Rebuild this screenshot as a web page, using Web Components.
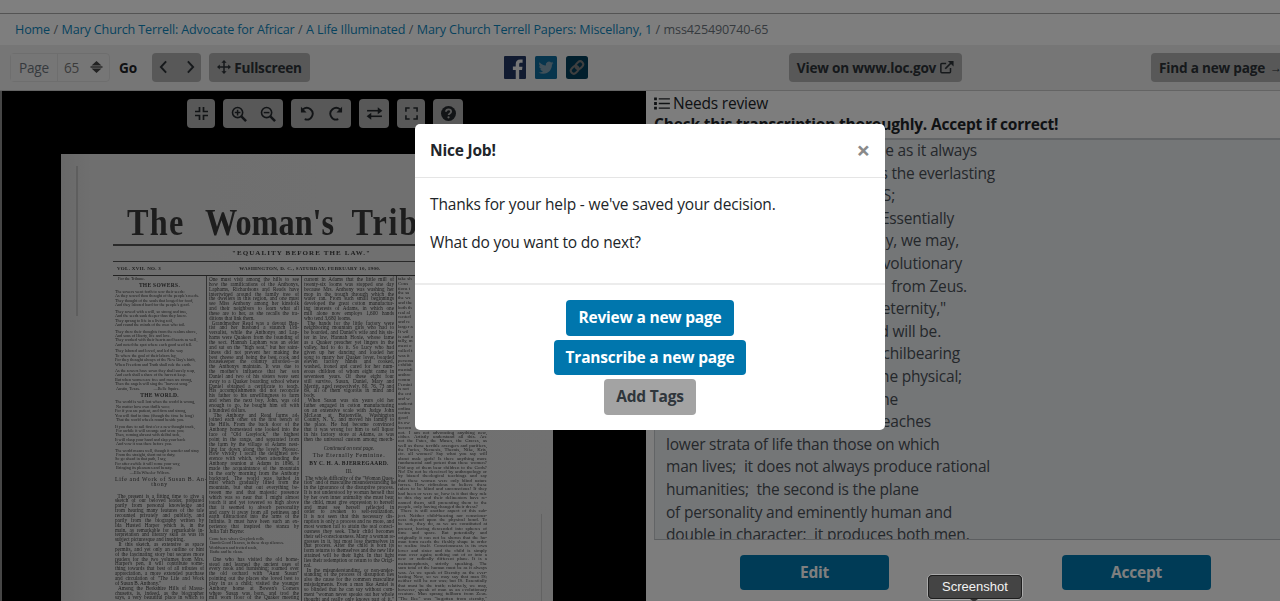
<!DOCTYPE html>
<html lang="en">
<head>
<meta charset="utf-8">
<title>Nice Job!</title>
<style>
html, body { margin: 0; height: 601px; overflow: hidden; background: #fff; }
body { font-family: "Open Sans", "Liberation Sans", sans-serif; color: #212529; letter-spacing: -.2px; }
</style>
</head>
<body>
<review-app></review-app>

<script>
// every element gets its own open shadow root, cloned from a template
function component(tag, css, html) {
  const template = document.createElement('template');
  template.innerHTML = `<style>${css}</style>${html}`;
  class Element extends HTMLElement {
    constructor() {
      super();
      this.attachShadow({ mode: 'open' });
      this.shadowRoot.appendChild(template.content.cloneNode(true));
    }
  }
  customElements.define(tag, Element);
}

const icon = (w, h, box, body) =>
  `<svg width="${w}" height="${h}" viewBox="${box}" fill="none" stroke="currentColor" stroke-width="1.700" aria-hidden="true">${body}</svg>`;

const icons = {
  compress: icon(13, 13, '0 0 13 13', '<path d="M4.500 0v4.500H0M8.500 0v4.500H13M4.500 13V8.500H0M8.500 13V8.500H13"/>'),
  zoomIn: icon(16, 16, '0 0 17 17', '<circle cx="7" cy="7" r="5.400"/><path d="M11 11l5 5" stroke-width="2.600"/><path d="M4 7h6M7 4v6" stroke-width="1.600"/>'),
  zoomOut: icon(16, 16, '0 0 17 17', '<circle cx="7" cy="7" r="5.400"/><path d="M11 11l5 5" stroke-width="2.600"/><path d="M4 7h6" stroke-width="1.600"/>'),
  undo: icon(15, 15, '0 0 16 16', '<path d="M3.200 3.500A6.200 6.200 0 1 1 5 14" stroke-width="2"/><path d="M1 .8V6.800H7z" fill="currentColor" stroke="none"/>'),
  redo: icon(15, 15, '0 0 16 16', '<path d="M12.800 3.500A6.200 6.200 0 1 0 11 14" stroke-width="2"/><path d="M15 .8V6.800H9z" fill="currentColor" stroke="none"/>'),
  swap: icon(17, 13, '0 0 18 14', '<path d="M1 4h14"/><path d="M17.500 4L12.500 .3v7.400z" fill="currentColor" stroke="none"/><path d="M17 10H3"/><path d="M.5 10l5-3.700v7.400z" fill="currentColor" stroke="none"/>'),
  expand: icon(13, 13, '0 0 14 14', '<path d="M1 5V1h4M9 1h4v4M1 9v4h4M13 9v4H9"/>'),
  help: `<svg width="15" height="15" viewBox="0 0 16 16" aria-hidden="true"><circle cx="8" cy="8" r="8" fill="currentColor"/><path d="M5.300 6.200C5.400 4.500 6.500 3.700 8 3.700c1.600 0 2.800.9 2.800 2.300 0 2-2.700 1.900-2.700 3.700" fill="none" stroke="#b0b0b0" stroke-width="1.900"/><circle cx="8" cy="12" r="1.200" fill="#b0b0b0"/></svg>`,
  left: icon(9, 14, '0 0 10 16', '<path d="M8 1.500L2 8l6 6.500" stroke-width="2.200"/>'),
  right: icon(9, 14, '0 0 10 16', '<path d="M2 1.500L8 8l-6 6.500" stroke-width="2.200"/>'),
  move: icon(14, 14, '0 0 15 15', '<path d="M7.500 2v11M2 7.500h11" stroke-width="1.600"/><path d="M7.500 0l2.800 3H4.700zM7.500 15l2.800-3H4.700zM0 7.500l3-2.800v5.600zM15 7.500l-3-2.800v5.600z" fill="currentColor" stroke="none"/>'),
  external: icon(14, 14, '0 0 16 15', '<path d="M12 8.500V13a1 1 0 0 1-1 1H2a1 1 0 0 1-1-1V4.500a1 1 0 0 1 1-1h5" stroke-width="1.700"/><path d="M6 9.500L14 1.500" stroke-width="2"/><path d="M9 .5h6.500V7z" fill="currentColor" stroke="none"/>'),
  list: icon(16, 13, '0 0 17 14', '<path d="M5 2h12M5 7h12M5 12h12" stroke-width="1.500"/><path d="M0 .5h3v3H0zM0 5.500h3v3H0zM0 10.500h3v3H0z" fill="currentColor" stroke="none"/>'),
  updown: `<svg width="13" height="12" viewBox="0 0 13 12" aria-hidden="true" fill="currentColor"><path d="M6.500 0L11.500 4.500H1.500zM6.500 12L11.500 7.500H1.500z"/><path d="M.5 5.300h12v1.400H.5z"/></svg>`,
  facebook: `<svg width="22" height="23" viewBox="0 0 24 24" aria-hidden="true" preserveAspectRatio="none"><path fill="#233763" d="M22.676 0H1.324C.593 0 0 .593 0 1.324v21.352C0 23.408.593 24 1.324 24h11.494v-9.294H9.689v-3.621h3.129V8.410c0-3.099 1.894-4.785 4.659-4.785 1.325 0 2.464.097 2.796.141v3.240h-1.921c-1.500 0-1.792.721-1.792 1.771v2.311h3.584l-.465 3.630H16.560V24h6.115c.733 0 1.325-.592 1.325-1.324V1.324C24 .593 23.408 0 22.676 0"/></svg>`,
  twitter: `<svg width="22" height="23" viewBox="0 0 22 23" aria-hidden="true"><rect width="22" height="23" rx="1.500" fill="#0f6a9b"/><g transform="translate(3.500 4.200) scale(.625)"><path fill="#83a0b2" d="M23.953 4.570a10 10 0 0 1-2.825.775 4.958 4.958 0 0 0 2.163-2.723c-.951.555-2.005.959-3.127 1.184a4.920 4.920 0 0 0-8.384 4.482C7.690 8.095 4.067 6.130 1.640 3.162a4.822 4.822 0 0 0-.666 2.475c0 1.710.870 3.213 2.188 4.096a4.904 4.904 0 0 1-2.228-.616v.060a4.923 4.923 0 0 0 3.946 4.827 4.996 4.996 0 0 1-2.212.085 4.936 4.936 0 0 0 4.604 3.417 9.867 9.867 0 0 1-6.102 2.105c-.390 0-.779-.023-1.170-.067a13.995 13.995 0 0 0 7.557 2.209c9.053 0 13.998-7.496 13.998-13.985 0-.210 0-.420-.015-.630A9.935 9.935 0 0 0 24 4.590z"/></g></svg>`,
  chain: `<svg width="22" height="23" viewBox="0 0 22 23" aria-hidden="true"><rect width="22" height="23" rx="2.500" fill="#033f5b"/><g fill="none" stroke="#7e7e7e" stroke-width="2" transform="rotate(-45 11 11.500)"><rect x="3.500" y="8.500" width="8.500" height="6" rx="3"/><rect x="10" y="8.500" width="8.500" height="6" rx="3"/></g></svg>`
};

component('bread-crumbs', `
  :host { display: flex; align-items: center; height: 31px; padding-left: 15px; font-size: 12.600px; letter-spacing: -.15px; color: #7a8a93; background: #fdfdfd; white-space: nowrap; }
  a { color: #0e86bd; text-decoration: none; }
  i { font-style: normal; color: #6c757d; padding: 0 3.500px; }
  span { color: #6c757d; }
`, `
  <a href="#">Home</a><i>/</i>
  <a href="#">Mary Church Terrell: Advocate for Africar</a><i>/</i>
  <a href="#">A Life Illuminated</a><i>/</i>
  <a href="#">Mary Church Terrell Papers: Miscellany, 1</a><i>/</i>
  <span>mss425490740-65</span>
`);

component('tool-button', `
  :host { display: inline-flex; align-items: center; justify-content: center; gap: 5px; height: 29px; box-sizing: border-box; padding: 0 8px; background: #b0b0b0; color: #2c3237; border-radius: 4px; font-weight: 700; font-size: 13.600px; white-space: nowrap; flex: none; }
  svg { display: block; }
`, `<slot></slot>`);

component('page-toolbar', `
  :host { display: flex; align-items: center; height: 46px; box-sizing: border-box; padding: 0 0 1px 10px; background: #ededed; border-bottom: 1px solid #c9c9c9; overflow: hidden; white-space: nowrap; }
  .page { display: flex; height: 29px; box-sizing: border-box; border: 1px solid #dcdcdc; border-radius: 4px; font-size: 13.600px; color: #6c757d; flex: none; }
  .page b { font-weight: 400; width: 46px; display: flex; align-items: center; justify-content: center; background: #ececec; border-right: 1px solid #dcdcdc; }
  .page span { width: 51px; display: flex; align-items: center; justify-content: space-between; box-sizing: border-box; padding: 0 6px 0 6px; color: #777; }
  .page span svg { color: #444; }
  .go { font-weight: 700; font-size: 13.600px; color: #1f2327; width: 33px; margin-left: 9px; flex: none; }
  .pair { gap: 18px; width: 49px; padding: 0; }
  .move { width: 101px; margin-left: 8px; padding: 0; gap: 3px; }
  .share { display: flex; gap: 9px; margin: 0 201px 0 194px; flex: none; }
  .share svg { display: block; }
  .view { width: 173px; padding: 0; gap: 4px; }
  .find { margin-left: 189px; }
  .find span { font-size: 12px; }
`, `
  <div class="page"><b>Page</b><span>65 ${icons.updown}</span></div>
  <div class="go">Go</div>
  <tool-button class="pair">${icons.left}${icons.right}</tool-button>
  <tool-button class="move">${icons.move}Fullscreen</tool-button>
  <div class="share">${icons.facebook}${icons.twitter}${icons.chain}</div>
  <tool-button class="view">View on www.loc.gov${icons.external}</tool-button>
  <tool-button class="find">Find a new page <span>→</span></tool-button>
`);

component('viewer-controls', `
  :host { display: flex; gap: 8px; height: 29px; padding-left: 185px; }
  tool-button { padding: 0; width: 28px; color: #24292d; }
  .double { width: 60px; gap: 13px; }
  .wide { width: 30px; }
`, `
  <tool-button>${icons.compress}</tool-button>
  <tool-button class="double">${icons.zoomIn}${icons.zoomOut}</tool-button>
  <tool-button class="double">${icons.undo}${icons.redo}</tool-button>
  <tool-button class="wide">${icons.swap}</tool-button>
  <tool-button>${icons.expand}</tool-button>
  <tool-button class="wide">${icons.help}</tool-button>
`);

// one div per printed line; short lines and paragraph ends stay flush left
const lines = (text) => {
  const rows = text.trim().split('\n').map(l => l.trim());
  return rows.map((l, i) => {
    const next = rows[i + 1];
    const end = l.length < 27 || (next && next.startsWith('&nbsp;'));
    return `<div${end ? ' class="e"' : ''}>${l}</div>`;
  }).join('');
};

component('news-page', `
  :host { display: block; width: 492px; height: 460px; box-sizing: border-box;
    background:
      linear-gradient(90deg, transparent 15px, #bdbdbd 15px, #bdbdbd 17px, transparent 17px) no-repeat 0 12px / 100% 150px,
      linear-gradient(90deg, transparent 480px, #c4c4c4 480px, #c4c4c4 481px, transparent 481px) no-repeat 0 360px / 100% 100px,
      linear-gradient(90deg, #d2d2d2 0, #dedede 6%, #e2e2e2 100%);
    padding: 52px 63px 0 52px; color: #3c3c3c; font-family: "Liberation Serif", serif; letter-spacing: 0; overflow: hidden; filter: blur(.35px); }
  h1 { margin: 0; height: 38px; font-size: 38px; line-height: 32px; font-weight: 700; padding-left: 14px; white-space: nowrap; word-spacing: 11px; color: #3a3a3a; transform: scaleX(.85); transform-origin: 14px 0; }
  h1 span { letter-spacing: 1.500px; margin-right: 4px; }
  h1 em { font-style: normal; letter-spacing: 2px; }
  .motto { border-top: 2px solid #555; border-bottom: 1px solid #555; height: 15px; text-align: center; font-size: 7px; line-height: 15px; letter-spacing: 1.100px; font-weight: 700; }
  .date { display: flex; gap: 78px; height: 13px; border-bottom: 1px solid #444; font-size: 5px; line-height: 13px; font-weight: 700; letter-spacing: .300px; padding: 0 6px 0 4px; }
  .cols { display: grid; grid-template-columns: 94px 95px 95px 92px; }
  .col { font-size: 5.200px; line-height: 4.850px; box-sizing: border-box; padding: 1px 2px 0 2px; border-right: 1px solid #666; text-align: justify; height: 330px; overflow: hidden; }
  .col:last-child { border: 0; padding-left: 1px; }
  .col div { text-align-last: justify; white-space: nowrap; height: 4.850px; }
  .col div.e { text-align-last: left; }
  .col:last-child div { height: 4.380px; line-height: 4.380px; font-size: 4.900px; }
  .col:last-child div.s { height: 4.800px; line-height: 4.800px; text-align-last: left; }
  section { text-align: left; }
  section div, .col section div { text-align-last: left; font-size: 4.200px; height: 4.400px; line-height: 4.400px; }
  section p { margin: 0 0 2.200px; }
  h2 { margin: 1.500px 0; font-size: 5.500px; line-height: 5px; text-align: center; font-weight: 700; letter-spacing: .300px; }
  .col h3 { margin: 2px 0 6px; font-size: 5.800px; line-height: 5.200px; text-align: center; font-weight: 400; letter-spacing: .700px; white-space: nowrap; }
  .col .c { text-align-last: center; }
`, `
  <h1><span>The</span> Woman's <em>Trib</em></h1>
  <div class="motto">"EQUALITY BEFORE THE LAW."</div>
  <div class="date"><span>VOL. XVII. NO. 3</span><span>WASHINGTON, D. C., SATURDAY, FEBRUARY 10, 1900.</span></div>
  <div class="cols">
    <div class="col">
      <section>
        <div style="padding-left:3px">For the Tribune.</div>
        <h2>THE SOWERS.</h2>
        <p>${lines(`The sowers went forth to sow their seeds:
          As they sowed thou thought of the people's needs.
          They thought of the souls that longed for food,
          And they labored hard for the people's good.`)}</p>
        <p>${lines(`They sowed with a will, so strong and true,
          And the seeds sank deeper than they knew.
          They sprang to life in a living soil,
          And round the minds of the men who toil.`)}</p>
        <p>${lines(`They drew their thoughts from the realms above,
          And sons of liberty, life and love.
          They worked with their hearts and hearts as well,
          And noted the spot where each good seed fell.`)}</p>
        <p>${lines(`They labored and loved, and led the way
          To where the goal of their labors lay,
          For they thought always of the New Day's birth,
          When Freedom and Truth shall rule the earth.`)}</p>
        <p>${lines(`As the sowers have sown they shall surely reap,
          And each shall a share of the harvest keep.
          But when women are free and men are strong,
          Then the angels will sing the "harvest song."
          &nbsp;Austin, Texas. &nbsp; &nbsp; &nbsp; &nbsp; &nbsp; &nbsp; —Belle Squire.`)}</p>
        <h2>THE WORLD.</h2>
        <p>${lines(`The world is well lost when the world is wrong,
          &nbsp;No matter how own thrills woo;
          For if you are patient, and firm and strong,
          You will find in time (though the time be long)
          &nbsp;That the world wheels round beside you.`)}</p>
        <p>${lines(`If you dare to sail first o'er a new thought track,
          &nbsp;For awhile it will scourge and score you;
          Then, coming abreast with skilful tack,
          It will clasp your hand and slap your back
          &nbsp;And vow it was there before you.`)}</p>
        <p>${lines(`The world means well, though it wander and stray
          &nbsp;From the straight, short cut to duty;
          So go ahead in that path, I say,
          For after awhile it will come your way,
          &nbsp;Bringing its pleasures and beauty.
          &nbsp; &nbsp; &nbsp; &nbsp; &nbsp; &nbsp; &nbsp; —Ella Wheeler Wilcox.`)}</p>
      </section>
      <h3>Life and Work of Susan B. An-<br>thony</h3>
      ${lines(`&nbsp;The present is a fitting time to give a
        sketch of our beloved leader, prepared
        partly from personal knowledge and
        from hearing many features of the tale
        recounted privately and publicly, and
        partly from the biography written by
        Ida Husted Harper which is, in the
        main, as remarkable for remarkable in-
        terpretation and literary skill as was its
        subject picturesque and inspiring.
        &nbsp;If this sketch, as extensive as space
        permits, and yet only an outline or hint
        of the fascinating story but secures more
        readers for the two volumes from Mrs.
        Harper's pen, it will contribute some-
        thing towards that best of all tributes of
        appreciation, a more extended purchase
        and circulation of "The Life and Work
        of Susan B. Anthony."
        &nbsp;Among the Berkshire Hills of Massa-
        chusetts, is, indeed, as the biographer
        says, a very beautiful place in which to`)}
    </div>
    <div class="col">
      ${lines(`One must visit among the hills to see
        how the ramifications of the Anthonys,
        Laphams, Richardsons and Reads have
        intertwined around the family tree of
        the dwellers in this region, and one must
        see Miss Anthony among her kinsfolk
        and their neighbors to learn what all
        these are to her, as she recalls the tra-
        ditions that link them.
        &nbsp;Grandmother Read was a devout Bap-
        tist and her husband a staunch Uni-
        versalist, while the Anthonys and Lap-
        hams were Quakers from the founding of
        the sect. Hannah Lapham was an elder
        and sat on the "high seat," but her saint-
        liness did not prevent her making the
        best cheese and being the best cook and
        housekeeper the country afforded—as
        the Anthonys maintain. It was due to
        the mother's influence that her son
        Daniel and two of his sisters were sent
        away to a Quaker boarding school where
        Daniel obtained a certificate to teach.
        His accomplishments did not reconcile
        his father to his unwillingness to farm
        and when the next boy, John, was old
        enough to go, he bought him off with
        a hundred dollars.
        &nbsp;The Anthony and Read farms ad-
        joined each other on the first bench of
        the Hills. From the back door of the
        Anthony homestead one looked into the
        face of "Old Greylock," the highest
        point in the range, and separated from
        the farm by the village of Adams nest-
        ling far down along the lovely Hoosac.
        How vividly I recall the delighted rev-
        erence with which, when attending the
        Anthony reunion at Adams in 1896, I
        made the acquaintance of the mountain
        in the early morning from the Anthony
        backyard. The world was bathed in
        mist which gradually lifted from the
        mountain, but shut out everything be-
        tween me and that majestic presence
        which was so near that I might almost
        touch it and yet towered so high above
        that it seemed to absorb personality
        and carry it away from all pettiness and
        earth distractions into the arms of the
        Infinite. It must have been such an ex-
        perience that inspired the stanza by
        Julia Taft Bayne:`)}
      <section>
        <p style="padding:1px 0 0 6px">${lines(`Come here where Greylock rolls
          &nbsp;Dumb Good Heaven, in these deep silences.
          Worldwarn and fretted souls,
          &nbsp;Bathe and be clean.`)}</p>
      </section>
      ${lines(`&nbsp;One who has visited the old home-
        stead and learned the ancient uses of
        every nook and furnishing; roamed over
        the old orchard with "Aunt Susan"
        pointing out the places she loved best to
        play in as a child; visited the younger
        Anthony home at Bowen's Corners
        where Susan was born, and trod the
        mill worn floor of the Quaker meeting`)}
    </div>
    <div class="col">
      ${lines(`current in Adams that the little mill of
        twenty-six looms was stopped one day
        because Mrs. Anthony was washing her
        mop in the trough through which the
        water ran. From such small beginnings
        developed the great cotton manufactur-
        ing interests of Adams, in which one
        mill alone now employs 1,600 hands
        who tend 3,680 looms.
        &nbsp;The hands for the little factory were
        neighboring mountain girls who had to
        be boarded, and Daniel's wife and his sis-
        ter in law, Hannah Hoxie, whose fame
        as a Quaker preacher yet lingers in the
        valley, had to do it. So Lucy who had
        given up her dancing and loaded her
        song to marry her Quaker lover, boarded
        eleven factory hands and cooked,
        washed, ironed and cared for her num-
        erous children of whom eight came in
        seventeen years. Of these eight four
        still survive, Susan, Daniel, Mary and
        Merritt, aged respectively, 80, 76, 73 and
        69, all of them vigorous in mind and
        body.
        &nbsp;When Susan was six years old her
        father engaged in cotton manufacturing
        on an extensive scale with Judge John
        McLean at Battenville, Washington
        County, N. Y., and moved his family to
        the place. He had become convinced
        that it was wrong for him to sell liquor
        in his factory store at Adams, as was
        then the universal custom among merch-`)}
      <div class="c" style="margin:4px 0 2px;font-style:italic">Continued on next page.</div>
      <h3 style="margin:2px 0 2px">The Eternally Feminine.</h3>
      <h2 style="margin:3px 0">BY C. H. A. BJERREGAARD.</h2>
      <div class="c" style="margin-bottom:2px">III.</div>
      ${lines(`&nbsp;The whole difficulty of the "Woman Ques-
        tion" and of masculine misunderstanding lies
        in the ignorance of the disruptive process.
        It is not understood by woman herself that
        by her own inner animality she must bear
        the child, must give expression to herself
        and must see herself reflected in
        order to awaken to self-realization.
        It is not seen that this necessary dis-
        ruption is only a process and no more, and
        most women fail to attain the real consci-
        ousness they seek. Their child becomes
        their self-consciousness. Many a woman re-
        gresses in it, but most lose themselves in
        that process. After the child is born its
        form returns to themselves and the new life
        attained will be their light. In that light
        lies their redemption or return to the Origi-
        nal.
        &nbsp;In the misunderstanding, or non-under-
        standing of the process of disruption lies
        also the cause for the common masculine
        misjudgments. Even a man like Amiel is
        so blinded that he can say without com-
        ment "woman never speaks out her whole
        thought and really only knows part of it,"
        and declare her a "sphinx, a mystery and
        contradictory, a monster of moral mischief."
        He cannot see that she is the eternal enigma`)}
    </div>
    <div class="col" id="last">
      ${lines(`take sh
        Cons
        tions t
        the sa
        the we
        and the
        both th
        real al
        cented
        and re
        larger a
        It wil
        is and o
        tally, m
        ment o
        called t
        was it
        persona
        exhibit
        mentali
        anthro
        comm
        Femini
        is not
        the ent
        and w
        underst
        ordina
        centra
        good
        its ow
        becom`).replace(/<div[^>]*>/g, '<div class="s">')}
      ${lines(`not. I am not advocating anything new,
        either. Artistly understand all this. Are
        not the Fates, the Muses, the Graces, as
        well as those terrible avengers and purifiers,
        the Furies, Nemesis, Themis, Nike, Kris,
        etc. all women? Say what you say will
        about male gods! Is there anything more
        fundamental and potent than these women?
        Did any of them bear children to the Gods?
        No! Do not be deceived by anthropology or
        by biased theological teachings and say
        that these women were only blind nature
        forces. How ridiculous to believe these
        rulers to be blind and unconscious! If they
        had been or were so, how is it that they rule
        to this day and their delineators have re-
        named them, still presenting them to the
        people, only having changed their dress?
        &nbsp;There is still another aspect of this sub-
        ject. Neither child-bearing nor conscious-
        ness depend upon the physical bond. To
        be sure, they do, as we are constituted at
        present, having descended into spheres of
        time and space. But potentially and
        originally it can not be shown that the hu-
        man form needs the fleshly shape in order
        to realize itself. Consciousness is its own
        lover and sister and the child is simply
        man over again; nothing out of or into a
        new or radically different plane. It is a
        metamorphosis, strictly speaking. The
        sum total of the human must be as it always
        was. As we speak of Eternity as the ever-
        lasting Now, so we may say that man IS;
        neither will he nor was; but IS. Essentially
        that must be the truth; relatively, we may,
        however, speak of man as an evolutionary
        creature. Man sprang fullborn from Zeus.
        "The Bee" was "begotten from eternity,"`)}
    </div>
  </div>
`);

component('image-viewer', `
  :host { display: block; box-sizing: border-box; width: 646px; flex: none; background: #000; border-left: 2px solid #8c8c8c; padding-top: 8px; overflow: hidden; }
  news-page { margin: 26px 0 0 59px; }
`, `
  <viewer-controls></viewer-controls>
  <news-page></news-page>
`);

const transcript = [
  [311, 'e as it always'], [329, 's the everlasting'], [229, 'S;'], [288, 'Essentially'],
  [293, 'y, we may,'], [296, 'volutionary'], [301, 'from Zeus.'], [280, 'eternity,"'],
  [275, 'd will be.'], [294, 'chilbearing'], [296, 'he physical;'], [232, 'he'], [265, 'eaches'],
  [0, 'lower strata of life than those on which'],
  [0, 'man lives;&nbsp; it does not always produce rational'],
  [0, 'humanities;&nbsp; the second is the plane'],
  [0, 'of personality and eminently human and'],
  [0, 'double in character;&nbsp; it produces both men.']
];

component('review-panel', `
  :host { display: flex; flex-direction: column; flex: 1; min-width: 0; box-sizing: border-box; padding-left: 8px; background: #fafafa; }
  header { height: 49px; box-sizing: border-box; border-bottom: 2px solid #c4c8cc; color: #212529; font-size: 15.500px; line-height: 22px; }
  .status { display: flex; align-items: center; gap: 3px; padding-top: 1px; }
  .status svg { display: block; }
  strong { display: block; font-weight: 700; white-space: nowrap; line-height: 19px; padding-top: 1px; }
  .text { height: 400px; box-sizing: border-box; background: #e9ecef; border-left: 1px solid #c4c8cc; border-bottom: 1px solid #b8bcc0; padding: 0 0 0 11px; overflow: hidden; font-size: 15.500px; line-height: 22.600px; color: #495057; }
  .text > div { margin-top: -1px; }
  .text p { margin: 0; height: 22.600px; white-space: nowrap; }
  .text p[style] { text-align: right; }
  footer { display: flex; gap: 173px; padding: 15px 0 0 86px; }
  .act { width: 149px; height: 35px; border-radius: 4px; background: #0076ad; color: #fff; font-weight: 700; font-size: 15.500px; line-height: 35px; text-align: center; }
`, `
  <header>
    <div class="status">${icons.list}<span>Needs review</span></div>
    <strong>Check this transcription thoroughly. Accept if correct!</strong>
  </header>
  <div class="text"><div>${transcript.map(([w, t]) => `<p${w ? ` style="width:${w}px"` : ''}>${t}</p>`).join('')}</div></div>
  <footer><div class="act">Edit</div><div class="act">Accept</div></footer>
`);

component('nice-modal', `
  :host { position: fixed; inset: 0; z-index: 5; display: flex; justify-content: center; align-items: flex-start; box-sizing: border-box; padding: 124px 0 0 20px; background: rgba(0,0,0,.5); }
  .dialog { width: 470px; background: #fff; border-radius: 5px; color: #212529; }
  header { display: flex; justify-content: space-between; align-items: center; height: 54px; box-sizing: border-box; padding: 0 15px 2px; border-bottom: 1px solid #e5e5e5; }
  h5 { margin: 0; font-size: 15.500px; font-weight: 700; }
  .close { font-weight: 700; font-size: 24px; line-height: 1; color: #8a8a8a; }
  .body { height: 105px; box-sizing: border-box; padding: 15px 15px 0; font-size: 15.500px; line-height: 22px; letter-spacing: -.16px; }
  .body p { margin: 0 0 16px; }
  .actions { display: flex; flex-direction: column; align-items: center; gap: 4px; padding: 15px 0 15px; border-top: 2px solid #ececec; }
  .btn { height: 35.700px; box-sizing: border-box; padding: 0 12px; border-radius: 4px; background: #0076ad; color: #fff; font-size: 15.500px; font-weight: 700; line-height: 35.700px; }
  .btn.grey { background: #a3a3a3; color: #2f363c; }
`, `
  <div class="dialog">
    <header><h5>Nice Job!</h5><span class="close">×</span></header>
    <div class="body"><p>Thanks for your help - we've saved your decision.</p><p>What do you want to do next?</p></div>
    <div class="actions">
      <div class="btn">Review a new page</div>
      <div class="btn">Transcribe a new page</div>
      <div class="btn grey">Add Tags</div>
    </div>
  </div>
`);

component('shot-tip', `
  :host { position: fixed; left: 927px; top: 574px; z-index: 9; width: 96px; height: 26px; box-sizing: border-box; background: #444; border: 1px solid #aaa; outline: 1px solid #1e1e1e; outline-offset: -2px; border-radius: 5px; color: #f2f2f2; font-family: "Liberation Sans", sans-serif; font-size: 13px; letter-spacing: 0; line-height: 24px; text-align: center; }
  :host::after { content: ""; position: absolute; left: 42px; bottom: -3px; width: 8px; height: 3px; background: #333; clip-path: polygon(0 0, 100% 0, 50% 100%); }
`, `Screenshot`);

component('review-app', `
  :host { display: block; height: 601px; overflow: hidden; }
  .top { height: 13px; background: #fff; border-bottom: 1px solid #a8a8a8; }
  .main { display: flex; height: 510px; }
`, `
  <div class="top"></div>
  <bread-crumbs></bread-crumbs>
  <page-toolbar></page-toolbar>
  <div class="main"><image-viewer></image-viewer><review-panel></review-panel></div>
  <nice-modal></nice-modal>
  <shot-tip></shot-tip>
`);
</script>
</body>
</html>
